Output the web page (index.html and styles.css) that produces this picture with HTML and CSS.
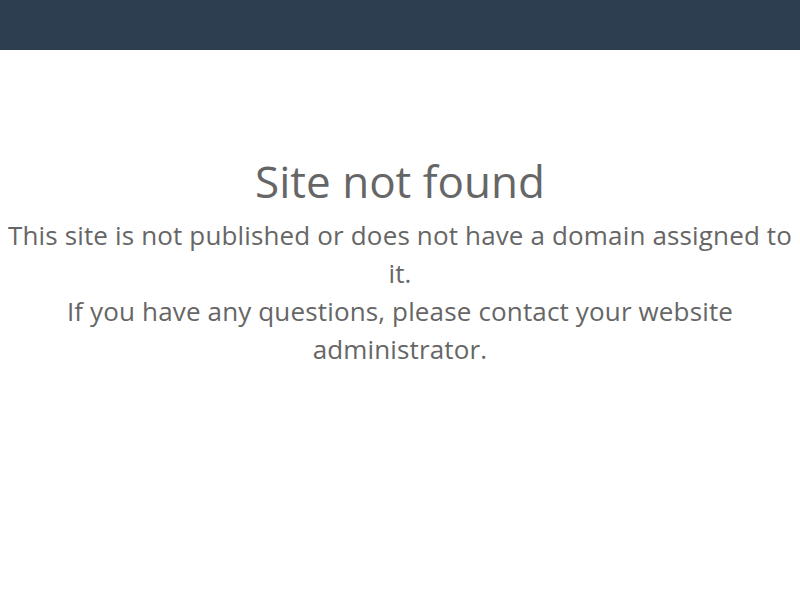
FILE: index.html
```html
<!DOCTYPE html>
<html lang="en">
<head>
    <meta charset="UTF-8">
    <meta name="viewport" content="width=device-width, initial-scale=1.0">
    <title>Site not found</title>
    <link rel="stylesheet" href="styles.css">
</head>
<body>

<div class="topbar"></div>
<div class="message">
    <h1>Site not found</h1>
    <p>This site is not published or does not have a domain assigned to it.<br>If you have any questions, please contact your website administrator.</p>
</div>

</body>
</html>
```

FILE: styles.css
```css
body {
    margin: 0;
    font-family: 'Open Sans', Lato, sans-serif;
    color: #666;
    background: #fff;
}
.topbar {
    height: 50px;
    background-color: #2d3e50;
}
.message {
    text-align: center;
    padding-top: 102px;
}
.message h1 {
    font-size: 44px;
    font-weight: normal;
    line-height: 58px;
    margin: 0 0 6px;
}
.message p {
    font-size: 26px;
    line-height: 38px;
    letter-spacing: 0.15px;
    margin: 0;
}
```
